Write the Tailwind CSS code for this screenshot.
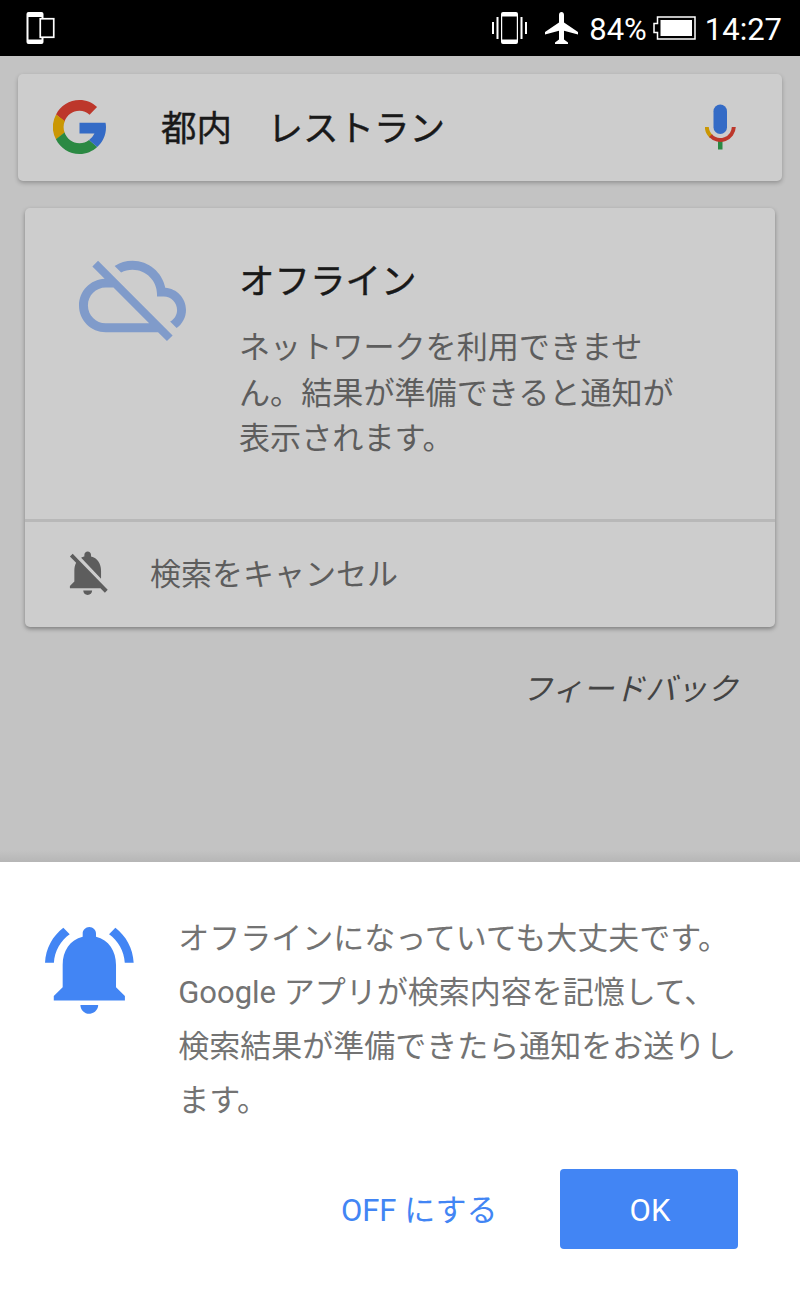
<!DOCTYPE html>
<html lang="ja">
  <head>
    <meta charset="UTF-8" />
    <title>オフライン検索</title>
    <meta name="viewport" content="width=device-width, initial-scale=1.0" />
    <script src="https://cdn.jsdelivr.net/npm/@tailwindcss/browser@4"></script>
    <style>
      body {
        font-family: Roboto, 'Noto Sans CJK JP', sans-serif;
      }
    </style>
  </head>
  <body class="w-[800px] h-[1297px] overflow-hidden bg-[#c3c3c3] flex flex-col">
    <!-- Status bar -->
    <header class="h-14 shrink-0 bg-black text-white flex items-center justify-between pl-[26px] pr-[18px]">
      <svg class="w-[30px] h-[34px]" viewBox="0 0 30 34">
        <path fill="#fff" fill-rule="evenodd" d="M2.500 1h13a2 2 0 0 1 2 2v28a2 2 0 0 1-2 2h-13a2 2 0 0 1-2-2V3a2 2 0 0 1 2-2zM2.500 6v22.500h13V6z" />
        <rect x="14.250" y="7.750" width="13.500" height="18.500" fill="#000" stroke="#fff" stroke-width="1.700" />
      </svg>
      <div class="flex items-center">
        <svg class="w-[36px] h-[34px] mr-[17px]" viewBox="0 0 36 34">
          <path fill="#fff" fill-rule="evenodd" d="M11 1h13a2 2 0 0 1 2 2v28a2 2 0 0 1-2 2H11a2 2 0 0 1-2-2V3a2 2 0 0 1 2-2zM10.200 5.500v23h14.600v-23z" />
          <path fill="#fff" d="M0 11h2v12H0zM4.500 6h2v22h-2zM28.500 6h2v22h-2zM33 11h2v12h-2z" />
        </svg>
        <svg class="w-[33px] h-[33px] mr-[11px]" viewBox="0 0 33 33">
          <path fill="#fff" d="M16.500 0c-1.500 0-2.500 1.300-2.500 3v7.500L0 20v2.500l14-3.700v8.700l-4 3V32h13v-1.500l-4-3v-8.700l14 3.700V20l-14-9.500V3c0-1.700-1-3-2.500-3z" />
        </svg>
        <span class="text-[31px] leading-none pt-[3px]">84%</span>
        <svg class="w-[43px] h-[24px] ml-[6px] mr-[9px]" viewBox="0 0 43 24">
          <path fill="none" stroke="#fff" stroke-width="1.500" d="M4.500 1H42v22H4.500v-6.500H1V7.500h3.500z" />
          <path fill="#fff" d="M7.500 4H39v16H7.500z" />
        </svg>
        <span class="text-[31px] leading-none pt-[3px]">14:27</span>
      </div>
    </header>

    <!-- Search box -->
    <div class="mt-[18px] mx-[18px] h-[107px] shrink-0 bg-[#cdcdcd] rounded-[5px] shadow-[0_2px_4px_rgba(0,0,0,0.25)] flex items-center pl-[35px] pr-[45px]">
      <svg class="w-[53px] h-[54px] mb-px" viewBox="4 4 40 40" preserveAspectRatio="none">
        <path fill="#bd372b" d="M6.310 14.690C9.660 8.340 16.300 4 24 4c5.090 0 9.720 1.880 13.250 5.200l-5.650 5.650A12 12 0 0 0 24 12c-5.220 0-9.650 3.340-11.300 8z" />
        <path fill="#ca9704" d="M6.310 14.690A20 20 0 0 0 6.300 33.340l6.500-5A12.100 12.100 0 0 1 12.900 19.520z" />
        <path fill="#2b8943" d="M24 44c5.170 0 9.860-1.980 13.400-5.190l-6.190-5.240A11.900 11.900 0 0 1 24 36c-5.200 0-9.620-3.320-11.280-7.950L6.200 33.080C9.500 39.560 16.230 44 24 44z" />
        <path fill="#346bc6" d="M43.610 20.800H24v8h11.300a12 12 0 0 1-4.090 4.770l6.190 5.240C41.500 35 44 30.500 44 24c0-1.200-.13-2.200-.39-3.200z" />
      </svg>
      <span class="ml-[55px] pt-[4px] text-[35.500px] leading-none [-webkit-text-stroke:0.4px] whitespace-pre text-[#191919]">都内　レストラン</span>
      <svg class="ml-auto mb-[2px] w-8 h-[46px]" viewBox="0 0 32 46">
        <rect x="8.500" y="0.500" width="13.500" height="29.500" rx="6.750" fill="#346bc6" />
        <path fill="#2b8943" d="M13 37h4.500v8.500H13z" />
        <path fill="none" stroke="#ca9704" stroke-width="4" d="M1.800 23a13.500 13.500 0 0 0 4.500 9.500" />
        <path fill="none" stroke="#bd372b" stroke-width="4" d="M5.500 31.700a13.500 13.500 0 0 0 23.300-8.700" />
      </svg>
    </div>

    <!-- Offline card -->
    <div class="mt-[27px] mx-[25px] h-[419px] shrink-0 bg-[#cdcdcd] rounded-[5px] shadow-[0_2px_4px_rgba(0,0,0,0.35)] flex flex-col">
      <div class="h-[311px] flex">
        <svg class="ml-[54px] mt-[35px] w-[107px] h-[107px] shrink-0" viewBox="0 0 24 24" fill="#809bca">
          <path d="M19.350 10.040C18.670 6.590 15.640 4 12 4c-1.480 0-2.850.43-4.010 1.170l1.460 1.460C10.210 6.230 11.080 6 12 6c3.040 0 5.500 2.460 5.500 5.500v.5H19c1.660 0 3 1.340 3 3 0 1.130-.64 2.110-1.560 2.620l1.450 1.450C23.160 18.160 24 16.680 24 15c0-2.640-2.050-4.780-4.650-4.960zM3 5.270l2.750 2.740C2.560 8.150 0 10.770 0 14c0 3.310 2.690 6 6 6h11.730l2 2L21 20.730 4.270 4 3 5.270zM7.730 10l8 8H6c-2.210 0-4-1.790-4-4s1.790-4 4-4h1.730z" />
        </svg>
        <div class="ml-[53px] pt-[49px]">
          <h1 class="text-[35.500px] leading-[50px] [-webkit-text-stroke:0.4px] text-[#191919]">オフライン</h1>
          <p class="mt-[18px] text-[31.100px] leading-[45.500px] text-[#5d5d5d] whitespace-nowrap">ネットワークを利用できませ<br />ん。結果が準備できると通知が<br />表示されます。</p>
        </div>
      </div>
      <div class="h-[3px] bg-[#b8b8b8]"></div>
      <div class="flex-1 flex items-center pl-9">
        <svg class="w-[53.400px] h-[53.400px] mb-[4px]" viewBox="0 0 24 24" fill="#5d5d5d">
          <path d="M20 18.690L7.840 6.140 5.270 3.490 4 4.760l2.800 2.800v.01c-.52.99-.8 2.160-.8 3.420v5l-2 2v1h13.730l2 2L21 19.720l-1-1.030zM12 22c1.110 0 2-.89 2-2h-4c0 1.110.89 2 2 2zm6-7.320V11c0-3.080-1.640-5.640-4.500-6.320V4c0-.83-.67-1.500-1.500-1.500s-1.500.67-1.500 1.500v.68c-.15.03-.29.08-.42.12-.1.03-.2.07-.3.11h-.01c-.01 0-.01 0-.02.01-.23.09-.46.2-.68.31 0 0-.01 0-.01.01L18 14.680z" />
        </svg>
        <span class="ml-[35.600px] text-[31px] leading-none text-[#5d5d5d]">検索をキャンセル</span>
      </div>
    </div>

    <div class="h-[235px] shrink-0 pt-[40px] pr-[62px] text-right text-[31px] leading-[46px] italic text-[#444] bg-linear-to-b from-transparent from-95% to-[#b6b6b6]">フィードバック</div>

    <!-- Bottom sheet -->
    <div class="flex-1 bg-white flex flex-col">
      <div class="flex pl-[36px] pt-[50px]">
        <svg class="mt-[4px] w-[106.700px] h-[106.700px] shrink-0" viewBox="0 0 24 24" fill="#4285f4">
          <path d="M7.580 4.080L6.150 2.650C3.750 4.480 2.170 7.300 2.030 10.500h2c.15-2.650 1.510-4.970 3.550-6.420zm12.390 6.420h2c-.15-3.200-1.730-6.020-4.120-7.850l-1.420 1.430c2.020 1.450 3.390 3.770 3.540 6.420zM18 11c0-3.070-1.640-5.640-4.500-6.320V4c0-.83-.67-1.500-1.500-1.500s-1.500.67-1.500 1.500v.68C7.630 5.360 6 7.920 6 11v5l-2 2v1h16v-1l-2-2v-5zm-6 11c.14 0 .27-.01.4-.04.65-.14 1.180-.58 1.440-1.180.1-.24.15-.5.15-.78h-4c.01 1.100.9 2 2.010 2z" />
        </svg>
        <p class="ml-[35.500px] text-[31px] leading-[54px] text-[#737373] whitespace-nowrap">オフラインになっていても大丈夫です。<br />Google アプリが検索内容を記憶して、<br />検索結果が準備できたら通知をお送りし<br />ます。</p>
      </div>
      <div class="flex justify-end items-center mt-[41px] pr-[62px] text-[31px]">
        <button class="mr-[62.500px] pt-[3px] leading-none text-[#4285f4]">OFF にする</button>
        <button class="w-[178px] h-20 pt-[4px] pl-[2px] rounded-[4px] bg-[#4285f4] text-white">OK</button>
      </div>
    </div>
  </body>
</html>
